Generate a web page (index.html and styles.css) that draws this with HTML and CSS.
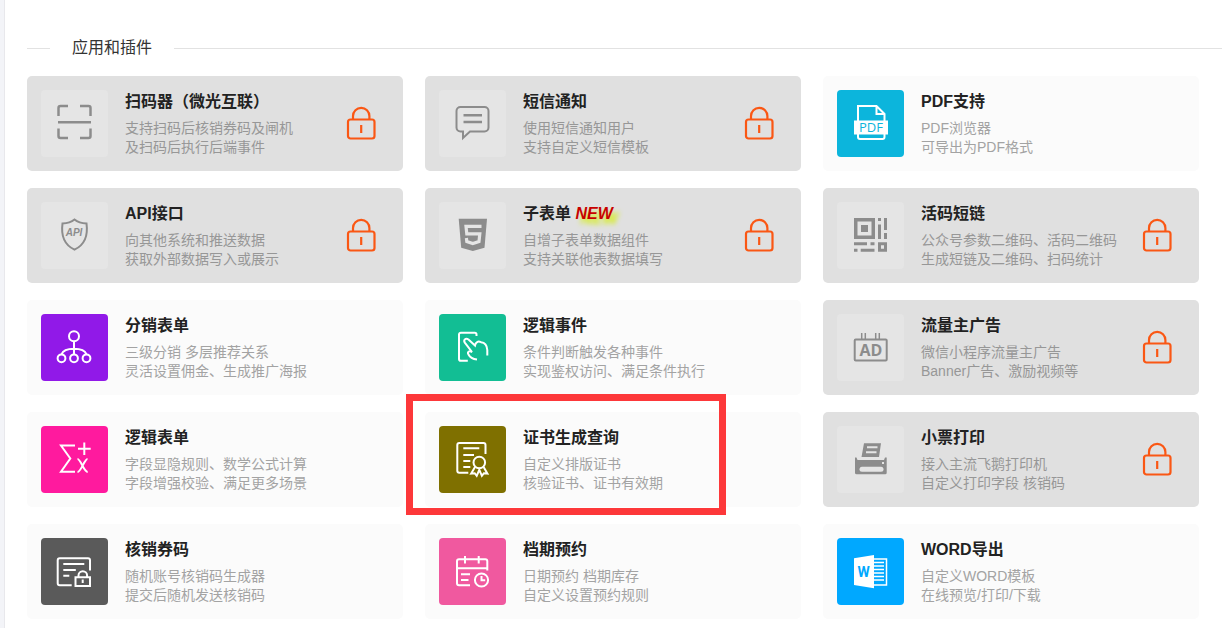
FILE: index.html
```html
<!DOCTYPE html>
<html lang="zh-CN">

<head>
  <meta charset="UTF-8" />
  <meta name="viewport" content="width=device-width, initial-scale=1.0" />
  <title>应用和插件</title>
  <link rel="stylesheet" href="styles.css">
</head>

<body>
  <!-- shared padlock, reused by every locked card -->
  <svg class="sprite" aria-hidden="true">
    <symbol id="lock" viewBox="0 0 30 35">
      <rect x="2" y="13.5" width="26.5" height="19" rx="2.5" />
      <path d="M7 13.5V10a8.2 8.2 0 0 1 16.4 0v3.5M15.2 19v8" />
    </symbol>
  </svg>

  <main class="content">
    <h2 class="section-title">应用和插件</h2>
    <div class="cards">

      <a class="card locked" href="#">
        <svg class="icon bold" viewBox="0 0 67 67">
          <path d="M17.5 26v-8a2 2 0 0 1 2-2H27M39 16h8.5a2 2 0 0 1 2 2v8M17.5 38.5v7.5a2 2 0 0 0 2 2H27M39 48h8.5a2 2 0 0 0 2-2v-7.5M17 32.3h33" />
        </svg>
        <div class="info">
          <h3>扫码器（微光互联）</h3>
          <p>支持扫码后核销券码及闸机<br>及扫码后执行后端事件</p>
        </div>
        <svg class="lock"><use href="#lock" /></svg>
      </a>

      <a class="card locked" href="#">
        <svg class="icon" viewBox="0 0 67 67">
          <path d="M21.5 17h24a4 4 0 0 1 4 4v16.5a4 4 0 0 1-4 4H31l-7 6.5v-6.5h-2.5a4 4 0 0 1-4-4V21a4 4 0 0 1 4-4z" />
          <path class="bold" d="M24.5 25.3h18.5M24.5 32h18.5" />
        </svg>
        <div class="info">
          <h3>短信通知</h3>
          <p>使用短信通知用户<br>支持自定义短信模板</p>
        </div>
        <svg class="lock"><use href="#lock" /></svg>
      </a>

      <a class="card" href="#">
        <svg class="icon cyan" viewBox="0 0 67 67">
          <path d="M21 31V16h18.5l8 8v7M21 44v3a2 2 0 0 0 2 2h22.5a2 2 0 0 0 2-2v-3M39.5 16v8h8" />
          <path class="fill" d="M17 30.5h34v14H17z" />
          <text class="pdf" x="34" y="42">PDF</text>
        </svg>
        <div class="info">
          <h3>PDF支持</h3>
          <p>PDF浏览器<br>可导出为PDF格式</p>
        </div>
      </a>

      <a class="card locked" href="#">
        <svg class="icon" viewBox="0 0 67 67">
          <path d="M33.5 17.5c-3 2.5-7 3.8-12 4-1.5 11 1 21 12 26.2 11-5.2 13.5-15.2 12-26.2-5-.2-9-1.5-12-4z" />
          <text class="api" x="33" y="34">API</text>
        </svg>
        <div class="info">
          <h3>API接口</h3>
          <p>向其他系统和推送数据<br>获取外部数据写入或展示</p>
        </div>
        <svg class="lock"><use href="#lock" /></svg>
      </a>

      <a class="card locked" href="#">
        <svg class="icon" viewBox="0 0 67 67">
          <path class="fill" d="M19.7 16.7H48l-2.5 29L33.8 49l-11.6-3.3z" />
          <path class="cut five" d="M42.5 24.3H27l.8 7.5h13l-.8 7.7-6.2 2-6-2-.4-3.5" />
        </svg>
        <div class="info">
          <h3>子表单 <em class="new">NEW</em></h3>
          <p>自增子表单数据组件<br>支持关联他表数据填写</p>
        </div>
        <svg class="lock"><use href="#lock" /></svg>
      </a>

      <a class="card locked" href="#">
        <svg class="icon" viewBox="0 0 67 67">
          <path class="fill" fill-rule="evenodd" d="M17 16h21v21H17zM20.5 19.5v14h14v-14zM41 40.3h9v9.4h-9zM44 43.3v3.4h3v-3.4z" />
          <path class="fill" d="M24 23h7v7h-7zM41 16h3v3h-3zM41 22.5h3V37h-3zM47 16h3v12h-3zM47 31h3v6h-3zM17 40.3h13v3H17zM33.5 40.3h4v3h-4zM17 46.7h3.5v3H17zM23.7 46.7h13.8v3H23.7z" />
        </svg>
        <div class="info">
          <h3>活码短链</h3>
          <p>公众号参数二维码、活码二维码<br>生成短链及二维码、扫码统计</p>
        </div>
        <svg class="lock"><use href="#lock" /></svg>
      </a>

      <a class="card" href="#">
        <svg class="icon purple" viewBox="0 0 67 67">
          <circle cx="33" cy="22.3" r="5" />
          <circle cx="20.5" cy="44.3" r="3.9" />
          <circle cx="33" cy="44.3" r="3.9" />
          <circle cx="45.5" cy="44.3" r="3.9" />
          <path d="M33 27.5v12.8M20.5 40.3c1.5-4 6.5-5.5 12.5-5.5s11 1.5 12.5 5.5" />
        </svg>
        <div class="info">
          <h3>分销表单</h3>
          <p>三级分销 多层推荐关系<br>灵活设置佣金、生成推广海报</p>
        </div>
      </a>

      <a class="card" href="#">
        <svg class="icon green" viewBox="0 0 67 67">
          <path d="M37.5 22v-1.5a1.7 1.7 0 0 0-1.7-1.7h-14A1.8 1.8 0 0 0 20 20.6v24.3a1.8 1.8 0 0 0 1.8 1.8h7" />
          <path d="M48.3 41.5V36c-.3-4.5-2.3-7.5-6.3-7.8-3-1.4-5.300-.2-6 3.3l-6.500-6c-3-2-5.5.5-3.5 3.3l7 9.2c-3-1.5-5 0-3.5 2.5 1.5 3 4.5 4.5 8.5 5" />
        </svg>
        <div class="info">
          <h3>逻辑事件</h3>
          <p>条件判断触发各种事件<br>实现鉴权访问、满足条件执行</p>
        </div>
      </a>

      <a class="card locked" href="#">
        <svg class="icon" viewBox="0 0 67 67">
          <rect x="17.7" y="25.5" width="32" height="21" rx="1" />
          <path class="thin" d="M24.7 19v6.5M28.3 19v6.5M38.7 19v6.5M42.3 19v6.5" />
          <text class="ad" x="34" y="42">AD</text>
        </svg>
        <div class="info">
          <h3>流量主广告</h3>
          <p>微信小程序流量主广告<br>Banner广告、激励视频等</p>
        </div>
        <svg class="lock"><use href="#lock" /></svg>
      </a>

      <a class="card" href="#">
        <svg class="icon magenta" viewBox="0 0 67 67">
          <path d="M34 19.5H20L29.3 32.5 20 45.7h14M43.3 16.5v12.5M37 22.7h12.7M36.5 33c3 0 6.5 13 10.2 13M46.5 33c-3 0-6.5 13-10 13" />
        </svg>
        <div class="info">
          <h3>逻辑表单</h3>
          <p>字段显隐规则、数学公式计算<br>字段增强校验、满足更多场景</p>
        </div>
      </a>

      <a class="card marked" href="#">
        <svg class="icon olive" viewBox="0 0 67 67">
          <path d="M46.5 28V19a2 2 0 0 0-2-2H20.3a2 2 0 0 0-2 2v25.7a2 2 0 0 0 2 2h9M24.3 22.2h16M24.3 29h10.7M24.3 35h7M24.3 41h7" />
          <circle cx="40.3" cy="36.5" r="5.8" />
          <path d="M36 41l-3.8 6.5 3.5-.3 2 2.6 2.6-6 2.6 6 2-2.6 3.5.3L44.6 41" />
        </svg>
        <div class="info">
          <h3>证书生成查询</h3>
          <p>自定义排版证书<br>核验证书、证书有效期</p>
        </div>
      </a>

      <a class="card locked" href="#">
        <svg class="icon" viewBox="0 0 67 67">
          <path class="fill" d="M27 17.3H44L42 31H24.500zM18 31.500h1.500l1 2.500h26.500l1-2.500h1.700v15.300a1.500 1.500 0 0 1-1.500 1.500H19.500a1.500 1.500 0 0 1-1.500-1.500z" />
          <path class="cut" d="M30 21.3h10.5M29 26.2h10.5M45 37h2" />
          <path class="cut slot" d="M25 43.2h19" />
        </svg>
        <div class="info">
          <h3>小票打印</h3>
          <p>接入主流飞鹅打印机<br>自定义打印字段 核销码</p>
        </div>
        <svg class="lock"><use href="#lock" /></svg>
      </a>

      <a class="card" href="#">
        <svg class="icon gray" viewBox="0 0 67 67">
          <path d="M49 32.5V22.3a2 2 0 0 0-2-2H18.7a2 2 0 0 0-2 2v23a2 2 0 0 0 2 2h12M22.3 26h21M22.3 32h12.5M22.3 37.7h6" />
          <path d="M34.5 39.2h14.500v8.8H34.500zM37.5 39v-1.500a4.3 4.3 0 0 1 8.6 0V39M41.7 41.5v3.5" />
        </svg>
        <div class="info">
          <h3>核销券码</h3>
          <p>随机账号核销码生成器<br>提交后随机发送核销码</p>
        </div>
      </a>

      <a class="card" href="#">
        <svg class="icon pink" viewBox="0 0 67 67">
          <path d="M48.3 32.5V23.2a2 2 0 0 0-2-2H20a2 2 0 0 0-2 2v22a2 2 0 0 0 2 2h11M18 30.3h30.3M26 18v7.5M39.7 18v7.5M22 36.3h9M22 42h7.5" />
          <circle cx="42.5" cy="42" r="6.6" />
          <path d="M42.5 38v4.2h3.7" />
        </svg>
        <div class="info">
          <h3>档期预约</h3>
          <p>日期预约 档期库存<br>自定义设置预约规则</p>
        </div>
      </a>

      <a class="card" href="#">
        <svg class="icon blue" viewBox="0 0 67 67">
          <path class="thin" d="M37 21h12.500v26H37M37 24.500h10M37 28h10M37 31.500h10M37 35h10M37 38.500h10M37 42h10" />
          <path class="fill" d="M17 20.3L37 17v33.3L17 47z" />
          <text class="word" x="26.5" y="39">W</text>
        </svg>
        <div class="info">
          <h3>WORD导出</h3>
          <p>自定义WORD模板<br>在线预览/打印/下载</p>
        </div>
      </a>

    </div>
  </main>
</body>

</html>
```
FILE: styles.css
```css
*,
*::before,
*::after {
  box-sizing: border-box;
}

body {
  margin: 0;
  min-height: 100vh;
  background-color: #fff;
  border-left: 4px solid #f3f4f8;
  font-family: "Liberation Sans", "Noto Sans CJK SC", sans-serif;
}

.sprite {
  display: none;
}

.content {
  min-height: 100vh;
  padding: 36px 0 8px 22px;
  border-left: 1px solid #e8e8ec;
}

.section-title {
  display: flex;
  align-items: center;
  gap: 22px;
  margin: 0 0 16px;
  font-size: 16px;
  font-weight: 400;
  line-height: 24px;
  color: #333;
}

.section-title::before,
.section-title::after {
  content: "";
  width: 23px;
  height: 1px;
  background-color: #e2e2e2;
}

.section-title::after {
  flex: 1;
}

.cards {
  display: grid;
  grid-template-columns: repeat(3, 1fr);
  gap: 17px 22px;
  padding-right: 23px;
}

.card {
  position: relative;
  display: flex;
  align-items: center;
  gap: 17px;
  padding: 14px;
  border-radius: 5px;
  background-color: #fbfbfb;
  color: #222;
  text-decoration: none;
}

.card.locked {
  background-color: #e0e0e0;
}

.card.marked {
  z-index: 1;
}

/* red frame round the featured card */
.card.marked::after {
  content: "";
  position: absolute;
  top: -18px;
  left: -19px;
  width: 320px;
  height: 121px;
  border: 7px solid #fd383a;
}

.info {
  flex: 1;
  white-space: nowrap;
}

.info h3 {
  margin: 0 0 5px;
  font-size: 16px;
  font-weight: 700;
  line-height: 24px;
}

.info p {
  margin: 0;
  font-size: 14px;
  line-height: 19px;
  color: #a3a3a3;
}

.locked .info p {
  color: #979797;
}

.new {
  color: #c80000;
  text-shadow: 5px 5px 5px #d4f000;
}

.icon {
  flex: none;
  width: 67px;
  height: 67px;
  border-radius: 4px;
  background-color: var(--tile);
  fill: none;
  stroke: #fff;
  stroke-width: 2;
}

.bold {
  stroke-width: 2.5;
}

.thin {
  stroke-width: 1.5;
}

.icon .fill {
  fill: #fff;
  stroke: none;
}

.icon .cut {
  stroke: var(--tile);
}

.icon .five {
  stroke-width: 3.2;
}

.icon .slot {
  stroke-width: 5;
  stroke-linecap: round;
}

.icon text {
  fill: var(--tile);
  stroke: none;
  text-anchor: middle;
}

.locked .icon {
  --tile: #e5e5e5;
  stroke: #8c8c8c;
}

.locked .icon .fill,
.locked .icon text {
  fill: #8c8c8c;
}

.cyan {
  --tile: #0cb5dc;
}

.purple {
  --tile: #9119e8;
}

.green {
  --tile: #12be94;
}

.magenta {
  --tile: #ff1a9e;
}

.olive {
  --tile: #7f7000;
}

.gray {
  --tile: #5a5a5a;
}

.pink {
  --tile: #f0599f;
}

.blue {
  --tile: #00a8ff;
}

.pdf {
  font-family: "Open Sans", sans-serif;
  font-size: 13px;
}

.api {
  font-size: 10px;
  font-style: italic;
  font-weight: 700;
}

.ad {
  font-family: "Open Sans", sans-serif;
  font-size: 16px;
  font-weight: 700;
}

.word {
  font-family: Roboto, sans-serif;
  font-size: 14px;
  font-weight: 700;
}

.lock {
  flex: none;
  width: 30px;
  height: 35px;
  margin-right: 13px;
  fill: none;
  stroke: #fa5714;
  stroke-width: 2.2;
}
```
